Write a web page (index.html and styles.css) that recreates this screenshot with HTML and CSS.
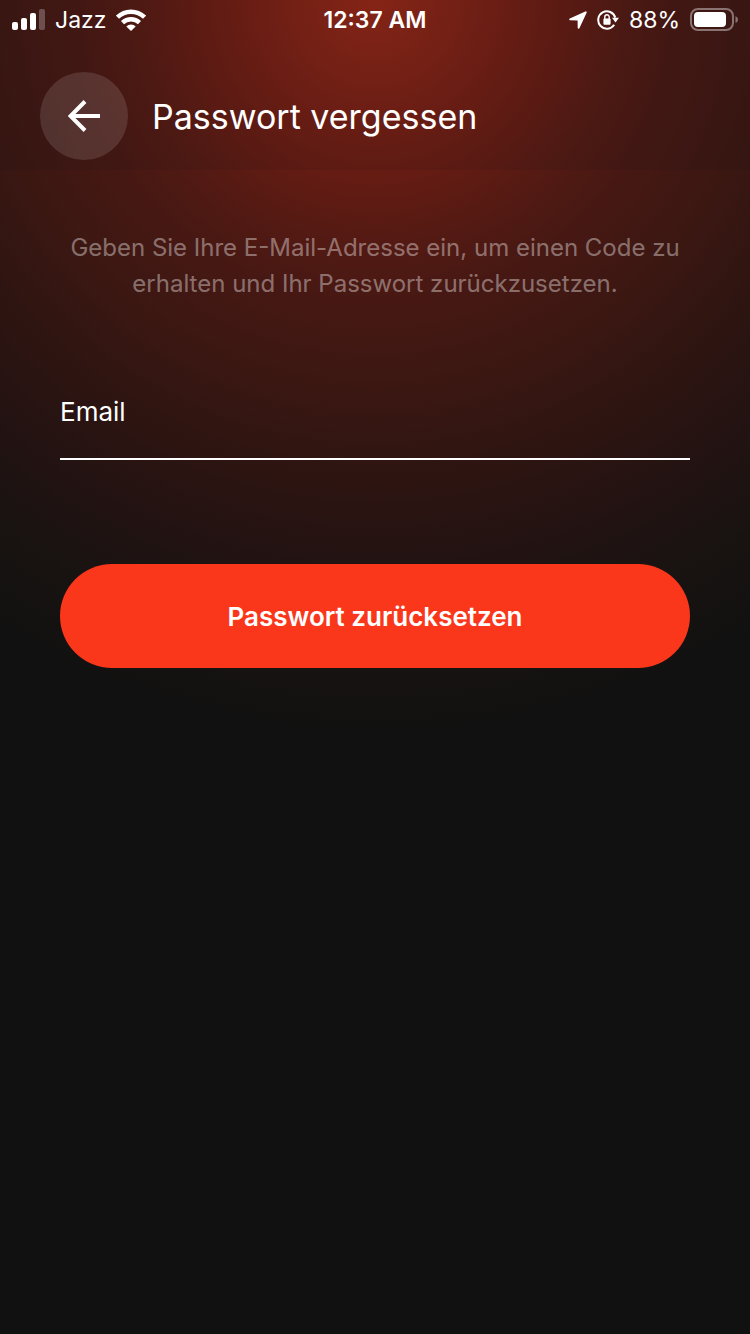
FILE: index.html
```html
<!DOCTYPE html>
<html lang="de">
<head>
    <meta charset="UTF-8">
    <meta name="viewport" content="width=device-width, initial-scale=1.0">
    <title>Passwort vergessen</title>
    <link rel="stylesheet" href="styles.css">
</head>
<body>

    <div class="top">
        <div class="status-bar">
            <div class="status-left">
                <svg width="33" height="22" viewBox="0 0 33 22" fill="#fff">
                    <rect x="0" y="13" width="6" height="8" rx="2"/>
                    <rect x="9" y="9" width="6" height="12" rx="2"/>
                    <rect x="18" y="4" width="6" height="17" rx="2"/>
                    <rect x="27" y="0" width="6" height="21" rx="2" opacity="0.25"/>
                </svg>
                <span>Jazz</span>
                <svg width="30" height="22" viewBox="0 0 30 22" fill="none" stroke="#fff" stroke-width="4.4">
                    <path d="M1.5 8.2 A19.5 19.5 0 0 1 28.5 8.2"/>
                    <path d="M6.5 13.7 A12.3 12.3 0 0 1 23.5 13.7"/>
                    <path d="M15 22 L10.3 17.5 A6.7 6.7 0 0 1 19.7 17.5 Z" fill="#fff" stroke="none"/>
                </svg>
            </div>
            <div class="status-time">12:37 AM</div>
            <div class="status-right">
                <svg width="18" height="18" viewBox="0 0 18 18" fill="#fff">
                    <path d="M16.3 0.4 L0.8 7.6 Q-0.5 8.8 1 9.3 L8.6 9.4 L8.7 17 Q9.2 18.5 10.4 17.2 L17.6 1.7 Q18 0 16.3 0.4 Z"/>
                </svg>
                <svg width="22" height="20" viewBox="0 0 22 20">
                    <path d="M17.2 14.8 A8.7 8.7 0 1 1 18.3 7.6" fill="none" stroke="#fff" stroke-width="2"/>
                    <path d="M15 7.8 H22 L18.5 12.6 Z" fill="#fff"/>
                    <rect x="6.4" y="8.6" width="7.2" height="6.2" rx="1" fill="#fff"/>
                    <path d="M7.8 9 V7 a2.2 2.2 0 0 1 4.4 0 V9" fill="none" stroke="#fff" stroke-width="1.4"/>
                </svg>
                <span>88%</span>
                <svg width="48" height="24" viewBox="0 0 48 24">
                    <rect x="1" y="1" width="42" height="21" rx="7" fill="none" stroke="#fff" stroke-opacity="0.4" stroke-width="2"/>
                    <rect x="4" y="4" width="32" height="15" rx="4" fill="#fff"/>
                    <path d="M45.5 8 Q48 9 48 11.5 Q48 14 45.5 15 Z" fill="#fff" fill-opacity="0.4"/>
                </svg>
            </div>
        </div>

        <header class="header">
            <button class="back" type="button" aria-label="Zurück">
                <svg width="32" height="32" viewBox="0 0 32 32" fill="none" stroke="#fff" stroke-width="4">
                    <path d="M17 1.5 L2.5 16 L17 30.5"/>
                    <path d="M2.5 16 H32"/>
                </svg>
            </button>
            <h1 class="title">Passwort vergessen</h1>
        </header>
    </div>

    <main class="content">
        <p class="hint">Geben Sie Ihre E-Mail-Adresse ein, um einen Code zu erhalten und Ihr Passwort zurückzusetzen.</p>
        <form>
            <input class="email" type="email" name="email" placeholder="Email" aria-label="Email">
            <button class="submit" type="submit">Passwort zurücksetzen</button>
        </form>
    </main>

</body>
</html>
```

FILE: styles.css
```css
* {
    box-sizing: border-box;
}
body {
    margin: 0;
    min-height: 100vh;
    color: #fff;
    font-family: Inter, "Liberation Sans", sans-serif;
    background: #111 radial-gradient(circle at 50% 0, #922617 0, #7a2116 100px, #671c13 170px, #541a13 240px, #471813 300px, #3a1712 400px, #301511 460px, #231312 560px, #181311 650px, #111 740px) no-repeat;
}
.top {
    height: 170px;
    background-color: rgba(17, 17, 17, 0.1);
}
.status-bar {
    display: grid;
    grid-template-columns: 1fr auto 1fr;
    align-items: center;
    height: 40px;
    padding: 0 12px;
    font-size: 23px;
}
.status-left,
.status-right {
    display: flex;
    align-items: center;
    gap: 10px;
}
.status-right {
    justify-content: flex-end;
}
.status-time {
    font-weight: 600;
}
.header {
    display: flex;
    align-items: center;
    gap: 24px;
    padding: 32px 40px 0;
}
.back {
    display: flex;
    align-items: center;
    justify-content: center;
    width: 88px;
    height: 88px;
    padding: 0;
    border: none;
    border-radius: 50%;
    background-color: rgba(255, 255, 255, 0.12);
    cursor: pointer;
}
.title {
    margin: 0;
    font-size: 34px;
    font-weight: 400;
}
.content {
    padding: 60px 60px 0;
}
.hint {
    margin: 0;
    font-size: 24px;
    line-height: 36px;
    text-align: center;
    color: rgba(255, 255, 255, 0.4);
}
.email {
    display: block;
    width: 100%;
    height: 96px;
    margin-top: 62px;
    padding: 0;
    border: none;
    border-bottom: 2px solid #fff;
    outline: none;
    background: none;
    color: #fff;
    font-family: inherit;
    font-size: 26px;
}
.email::placeholder {
    color: #fff;
    opacity: 1;
}
.submit {
    width: 100%;
    height: 104px;
    margin-top: 104px;
    border: none;
    border-radius: 52px;
    background-color: #fa361b;
    color: #fff;
    font-family: inherit;
    font-size: 26px;
    font-weight: 600;
    cursor: pointer;
}
```
